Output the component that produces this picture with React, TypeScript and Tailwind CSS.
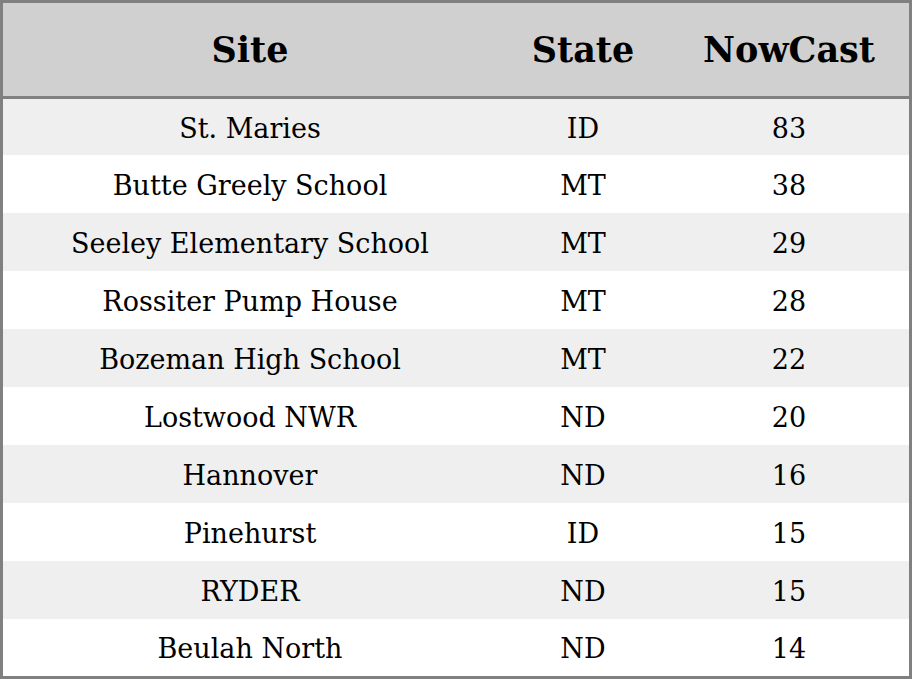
const rows = [
  { site: "St. Maries", state: "ID", nowcast: 83 },
  { site: "Butte Greely School", state: "MT", nowcast: 38 },
  { site: "Seeley Elementary School", state: "MT", nowcast: 29 },
  { site: "Rossiter Pump House", state: "MT", nowcast: 28 },
  { site: "Bozeman High School", state: "MT", nowcast: 22 },
  { site: "Lostwood NWR", state: "ND", nowcast: 20 },
  { site: "Hannover", state: "ND", nowcast: 16 },
  { site: "Pinehurst", state: "ID", nowcast: 15 },
  { site: "RYDER", state: "ND", nowcast: 15 },
  { site: "Beulah North", state: "ND", nowcast: 14 },
];

export default function App() {
  return (
    <div className="w-[912px] h-[679px] border-[3px] border-[#808080] bg-white text-black font-['DejaVu_Serif',serif] flex flex-col">
      {/* header */}
      <div className="grid grid-cols-[494px_172px_240px] h-[96px] shrink-0 items-center pt-[2px] bg-[#d0d0d0] border-b-[3px] border-[#808080] text-[35px] font-bold">
        <div className="text-center">Site</div>
        <div className="text-center">State</div>
        <div className="text-center">NowCast</div>
      </div>
      {/* body */}
      <div className="flex-1 flex flex-col">
        {rows.map((row, i) => (
          <div
            key={row.site}
            className={
              (i === 0 ? "h-[56px] " : i === rows.length - 1 ? "flex-1 " : "h-[58px] ") +
              (i % 2 === 0
                ? "grid grid-cols-[494px_172px_240px] items-center pt-1 bg-[#efefef] text-[27px]"
                : "grid grid-cols-[494px_172px_240px] items-center pt-1 bg-white text-[27px]")
            }
          >
            <div className="text-center">{row.site}</div>
            <div className="text-center">{row.state}</div>
            <div className="text-center">{row.nowcast}</div>
          </div>
        ))}
      </div>
    </div>
  );
}
